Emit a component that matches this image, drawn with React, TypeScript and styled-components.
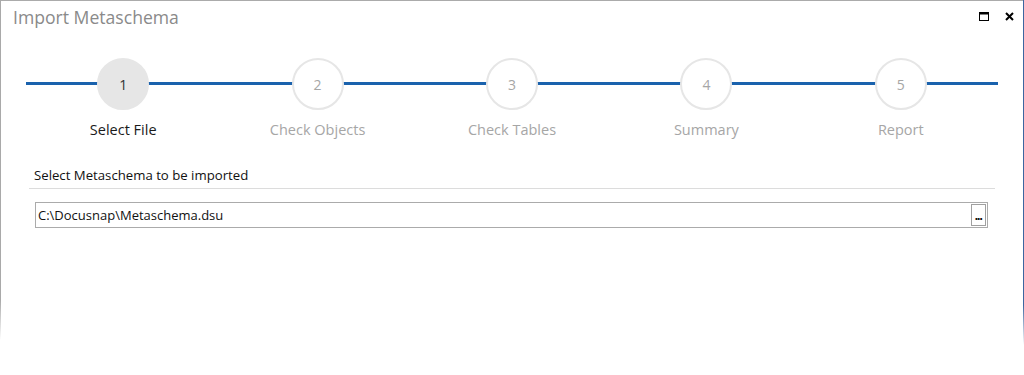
import React from "react";
import styled, { createGlobalStyle } from "styled-components";

const Global = createGlobalStyle`
  html, body { margin: 0; padding: 0; background: #fff; }
  body { width: 1024px; height: 375px; overflow: hidden; font-family: "Open Sans", "Noto Sans", sans-serif; }
`;

const Window = styled.div`
  position: relative;
  width: 1024px;
  height: 375px;
  background: #fff;
  box-sizing: border-box;
  border-top: 1px solid #ababab;
  &::before {
    content: "";
    position: absolute;
    left: 0;
    top: -1px;
    width: 1px;
    height: 376px;
    background: linear-gradient(to bottom, #a9a9a9 0, #a9a9a9 300px, #ffffff 340px);
  }
  &::after {
    content: "";
    position: absolute;
    right: 0;
    top: -1px;
    width: 1px;
    height: 376px;
    background: linear-gradient(to bottom, #3c66a0 0, #3c66a0 305px, #ffffff 345px);
  }
`;

const TitleBar = styled.div`
  display: flex;
  align-items: center;
  height: 33px;
  padding: 0 10px 0 13px;
`;

const Title = styled.div`
  flex: 1;
  font-size: 17.6px;
  color: #8a8a8a;
  line-height: 20px;
  margin-top: -2px;
`;

const Controls = styled.div`
  display: flex;
  align-items: center;
  gap: 16px;
  margin-top: -2px;
`;

const Steps = styled.div`
  display: grid;
  grid-template-columns: repeat(5, 1fr);
  width: 972px;
  margin: 24px 0 0 26px;
  background: linear-gradient(#1a62ad, #1a62ad) no-repeat 0 24px / 100% 3px;
`;

const Step = styled.div`
  display: flex;
  flex-direction: column;
  align-items: center;
`;

const Circle = styled.div<{ $active?: boolean }>`
  width: 52px;
  height: 52px;
  box-sizing: border-box;
  border-radius: 50%;
  border: 2px solid #e6e6e6;
  background: ${(p) => (p.$active ? "#e6e6e6" : "#fff")};
  color: ${(p) => (p.$active ? "#333" : "#a6a6a6")};
  display: flex;
  align-items: center;
  justify-content: center;
  font-size: 14px;
`;

const StepLabel = styled.div<{ $active?: boolean }>`
  margin-top: 10px;
  font-size: 14.5px;
  line-height: 20px;
  color: ${(p) => (p.$active ? "#1a1a1a" : "#a6a6a6")};
`;

const Section = styled.div`
  margin: 26px 0 0 29px;
  width: 966px;
`;

const SectionLabel = styled.div`
  font-size: 13.2px;
  line-height: 18px;
  padding: 0 0 4px 5px;
  color: #111;
  border-bottom: 1px solid #dcdcdc;
`;

const Field = styled.div`
  display: flex;
  align-items: center;
  height: 26px;
  box-sizing: border-box;
  margin: 13px 7px 0 6px;
  border: 1px solid #ababab;
  padding: 1px 1px 1px 2px;
`;

const FieldText = styled.div`
  flex: 1;
  font-size: 13px;
  color: #111;
`;

const BrowseButton = styled.div`
  width: 15px;
  height: 22px;
  box-sizing: border-box;
  border: 1px solid #a0a0a0;
  font-family: "DejaVu Sans", sans-serif;
  font-size: 10px;
  font-weight: bold;
  line-height: 1;
  display: flex;
  align-items: flex-end;
  justify-content: center;
  padding-bottom: 3px;
  color: #111;
  letter-spacing: -1.5px;
  text-indent: -1px;
`;

const steps = ["Select File", "Check Objects", "Check Tables", "Summary", "Report"];

export default function App() {
  return (
    <>
      <Global />
      <Window>
        <TitleBar>
          <Title>Import Metaschema</Title>
          <Controls>
            <svg width="10" height="9" viewBox="0 0 10 9">
              <rect x="0.5" y="0.5" width="9" height="8" fill="none" stroke="#000" />
              <rect x="0" y="0" width="10" height="2.5" fill="#000" />
            </svg>
            <svg width="9" height="9" viewBox="0 0 9 9">
              <path d="M1 1 L8 8 M8 1 L1 8" stroke="#000" strokeWidth="2" />
            </svg>
          </Controls>
        </TitleBar>
        <Steps>
          {steps.map((s, i) => (
            <Step key={s}>
              <Circle $active={i === 0}>{i + 1}</Circle>
              <StepLabel $active={i === 0}>{s}</StepLabel>
            </Step>
          ))}
        </Steps>
        <Section>
          <SectionLabel>Select Metaschema to be imported</SectionLabel>
          <Field>
            <FieldText>C:\Docusnap\Metaschema.dsu</FieldText>
            <BrowseButton>...</BrowseButton>
          </Field>
        </Section>
      </Window>
    </>
  );
}
